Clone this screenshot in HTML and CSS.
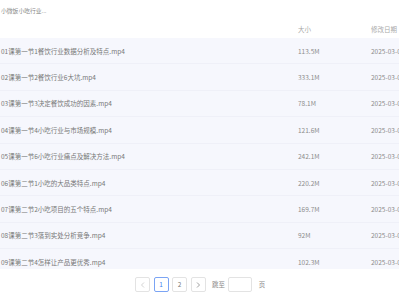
FILE: index.html
```html
<!DOCTYPE html>
<html lang="zh">
<head>
    <meta charset="UTF-8">
    <meta name="viewport" content="width=device-width, initial-scale=1.0">
    <title>文件列表</title>
    <link rel="stylesheet" href="styles.css">
</head>
<body>
    <div class="page">
        <div class="title">小微饭小吃行业...</div>

        <div class="table-head">
            <span class="col-name"></span>
            <span class="col-size">大小</span>
            <span class="col-date">修改日期</span>
        </div>

        <div class="table-body">
            <div class="row"><span class="col-name">01课第一节1餐饮行业数据分析及特点.mp4</span><span class="col-size">113.5M</span><span class="col-date">2025-03-05</span></div>
            <div class="row"><span class="col-name">02课第一节2餐饮行业6大坑.mp4</span><span class="col-size">333.1M</span><span class="col-date">2025-03-05</span></div>
            <div class="row"><span class="col-name">03课第一节3决定餐饮成功的因素.mp4</span><span class="col-size">78.1M</span><span class="col-date">2025-03-05</span></div>
            <div class="row"><span class="col-name">04课第一节4小吃行业与市场规模.mp4</span><span class="col-size">121.6M</span><span class="col-date">2025-03-05</span></div>
            <div class="row"><span class="col-name">05课第一节6小吃行业痛点及解决方法.mp4</span><span class="col-size">242.1M</span><span class="col-date">2025-03-05</span></div>
            <div class="row"><span class="col-name">06课第二节1小吃的大品类特点.mp4</span><span class="col-size">220.2M</span><span class="col-date">2025-03-05</span></div>
            <div class="row"><span class="col-name">07课第二节2小吃项目的五个特点.mp4</span><span class="col-size">169.7M</span><span class="col-date">2025-03-05</span></div>
            <div class="row"><span class="col-name">08课第二节3落到实处分析竞争.mp4</span><span class="col-size">92M</span><span class="col-date">2025-03-05</span></div>
            <div class="row"><span class="col-name">09课第二节4怎样让产品更优秀.mp4</span><span class="col-size">102.3M</span><span class="col-date">2025-03-05</span></div>
        </div>

        <div class="pager">
            <button class="page-btn arrow" disabled>
                <svg width="6" height="6" viewBox="0 0 6 6"><path d="M4 0.5 L1.5 3 L4 5.5" fill="none" stroke="#c8c8c8" stroke-width="0.8"/></svg>
            </button>
            <button class="page-btn active">1</button>
            <button class="page-btn">2</button>
            <button class="page-btn arrow">
                <svg width="6" height="6" viewBox="0 0 6 6"><path d="M2 0.5 L4.5 3 L2 5.5" fill="none" stroke="#888" stroke-width="0.8"/></svg>
            </button>
            <span class="jump-label">跳至</span>
            <input class="jump-input" type="text">
            <span class="jump-label">页</span>
        </div>
    </div>
</body>
</html>
```

FILE: styles.css
```css
body {
    margin: 0;
    font-family: "Noto Sans CJK SC", "Noto Sans", sans-serif;
    background-color: white;
    color: #666;
}
.page {
    width: 399px;
    height: 300px;
    overflow: hidden;
}
.title {
    height: 20px;
    line-height: 22px;
    font-size: 5.8px;
    color: #888;
    padding-left: 1px;
}
.table-head,
.row {
    display: grid;
    grid-template-columns: 298px 73px 60px;
    align-items: center;
    font-size: 6.5px;
    white-space: nowrap;
}
.table-head {
    height: 18px;
}
.table-body {
    height: 231px;
    overflow: hidden;
    background-color: #f6f7fd;
}
.row {
    height: 26.4px;
    box-sizing: border-box;
    border-bottom: 1px solid #eff0f8;
}
.col-name {
    padding-left: 1px;
    color: #777;
}
.col-size,
.col-date {
    color: #8c8c8c;
}
.table-head .col-size,
.table-head .col-date {
    color: #aaa;
}
.pager {
    display: flex;
    align-items: center;
    gap: 3.5px;
    padding-left: 135px;
    padding-top: 8px;
}
.page-btn {
    width: 15px;
    height: 15px;
    padding: 0;
    border: 1px solid #e3e3e3;
    border-radius: 2px;
    background-color: white;
    color: #777;
    font-family: "Noto Sans CJK SC", sans-serif;
    font-size: 6.4px;
    display: flex;
    align-items: center;
    justify-content: center;
}
.page-btn.active {
    border-color: #7ba4f4;
    color: #3d7cf0;
}
.jump-label {
    font-size: 6.4px;
    color: #888;
    margin-left: 3px;
}
.jump-input {
    width: 24px;
    height: 15px;
    box-sizing: border-box;
    border: 1px solid #e3e3e3;
    border-radius: 2px;
    padding: 0;
}
```
